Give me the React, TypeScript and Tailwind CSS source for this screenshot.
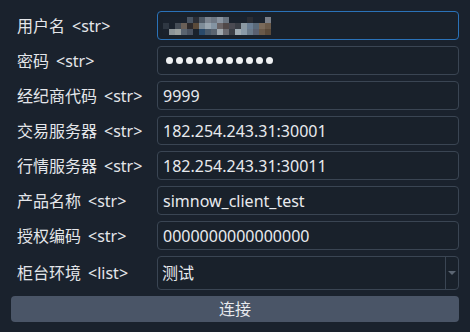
const FONT = "font-['Noto_Sans','Noto_Sans_CJK_SC',sans-serif]"

const bg = "#1a222d"
const mosaic: string[][] = [
  [bg, bg, bg, bg, "#4a5563", "#2b2e36", "#505a66", "#7d8590", "#6f7884", "#8a94a0", "#6a7480", bg, bg, bg, "#2a2d34", bg, bg, "#7a7f88"],
  ["#2e3742", bg, "#444c56", "#6a6058", "#2d2a2c", "#5a4a3a", "#7e8c98", "#9aa6b0", "#8494a2", "#6a6466", "#504848", "#4a4a52", "#3a3e46", "#8c9aa4", "#6a7e94", "#5a6a7a", "#7a6a5a", "#6a5a4a"],
  [bg, "#8c9498", "#9aa0a0", "#5a6470", "#4a5260", bg, "#2a4a6a", "#4a5a6a", "#5a6470", "#a0a8ae", "#6a6a70", "#3a3e46", "#a0acb4", "#8a9aa8", "#6a7a8a", "#5a6070", "#6a5a4a", "#5a4a3a"],
]

const Label = ({ name, type }: { name: string; type: string }) => (
  <div className="flex items-center pl-[6px] text-[16px] leading-none text-[#e4e6ea] whitespace-nowrap">
    {name}<span className="ml-[7px]">&lt;{type}&gt;</span>
  </div>
)

const Field = ({ children, focus }: { children: React.ReactNode; focus?: boolean }) => (
  <div
    className={
      "h-[29px] rounded-[4px] border bg-[#19212b] flex items-center px-[5px] text-[16px] leading-none text-[#e8eaee] " +
      (focus ? "border-[#2a72b8]" : "border-[#3a4553]")
    }
  >
    {children}
  </div>
)

export default function App() {
  return (
    <div className={`w-[470px] h-[332px] bg-[#1a222d] pt-[11px] px-[11px] ${FONT}`}>
      <div className="grid grid-cols-[146px_302px] gap-y-[6px]">
        <Label name="用户名" type="str" />
        <Field focus>
          <div className="flex flex-col ml-[0px]">
            {mosaic.map((row, i) => (
              <div key={i} className="flex">
                {row.map((c, j) => (
                  <div key={j} className="w-[6px] h-[6px]" style={{ background: c }} />
                ))}
              </div>
            ))}
          </div>
        </Field>

        <Label name="密码" type="str" />
        <Field>
          <div className="flex gap-[3px] pl-[3px]">
            {Array.from({ length: 11 }).map((_, i) => (
              <div key={i} className="w-[7px] h-[7px] rounded-full bg-[#eef0f2]" />
            ))}
          </div>
        </Field>

        <Label name="经纪商代码" type="str" />
        <Field>9999</Field>

        <Label name="交易服务器" type="str" />
        <Field>182.254.243.31:30001</Field>

        <Label name="行情服务器" type="str" />
        <Field>182.254.243.31:30011</Field>

        <Label name="产品名称" type="str" />
        <Field>simnow_client_test</Field>

        <Label name="授权编码" type="str" />
        <Field>0000000000000000</Field>

        <Label name="柜台环境" type="list" />
        <div className="h-[34px] rounded-[4px] border border-[#3a4553] bg-[#19212b] flex text-[16px] leading-none text-[#e8eaee]">
          <div className="flex-1 flex items-center px-[4px]">测试</div>
          <div className="w-[13px] border-l border-[#3a4553] flex items-center justify-center">
            <div className="w-0 h-0 border-l-[4px] border-r-[4px] border-t-[4px] border-l-transparent border-r-transparent border-t-[#5c6673]" />
          </div>
        </div>
      </div>
      <div className="mt-[6px] h-[26px] rounded-[4px] bg-[#4a5567] flex items-center justify-center text-[16px] leading-none text-[#e8eaee]">
        连接
      </div>
    </div>
  )
}
